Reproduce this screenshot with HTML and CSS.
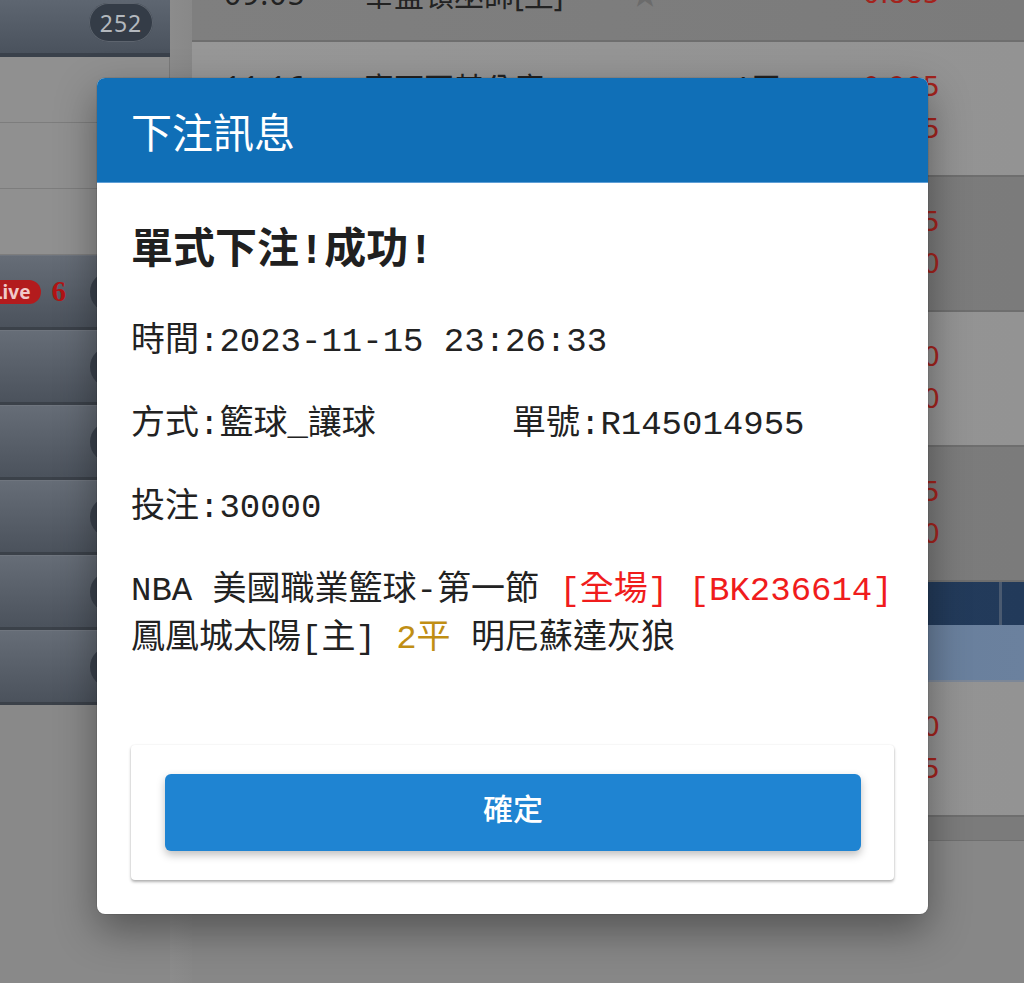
FILE: index.html
```html
<!DOCTYPE html>
<html lang="zh-Hant">
<head>
<meta charset="utf-8">
<title>下注訊息</title>
<link rel="stylesheet" href="styles.css">
</head>
<body>
<div class="screen">
  <aside class="side">
    <div class="side-top"><span class="count">252</span></div>
    <div class="side-light"></div>
    <div class="side-light"></div>
    <div class="side-light"></div>
    <div class="side-dark"><span class="live">Live</span><span class="live-num">6</span><span class="pill"></span></div>
    <div class="side-dark"><span class="pill push"></span></div>
    <div class="side-dark"><span class="pill push"></span></div>
    <div class="side-dark"><span class="pill push"></span></div>
    <div class="side-dark"><span class="pill push"></span></div>
    <div class="side-dark"><span class="pill push"></span></div>
    <div class="side-rest"></div>
  </aside>
  <div class="strip"></div>
  <main class="table">
    <div class="match dark">
      <div class="line"><span class="time">09:05</span><span class="team">布魯克林籃網</span><span class="star"></span><span class="hcp"></span><span class="odds">0.935</span></div>
      <div class="line"><span class="time">09:05</span><span class="team">華盛頓巫師[主]</span><span class="star">★</span><span class="hcp"></span><span class="odds">0.885</span></div>
    </div>
    <div class="match light">
      <div class="line"><span class="time">11:16</span><span class="team">密爾瓦基公鹿</span><span class="star"></span><span class="hcp">1平</span><span class="odds">0.905</span></div>
      <div class="line"><span class="time"></span><span class="team">底特律活塞[主]</span><span class="star"></span><span class="hcp"></span><span class="odds">0.965</span></div>
    </div>
    <div class="match dark">
      <div class="line"><span class="time"></span><span class="team"></span><span class="star"></span><span class="hcp"></span><span class="odds">0.925</span></div>
      <div class="line"><span class="time"></span><span class="team"></span><span class="star"></span><span class="hcp"></span><span class="odds">0.950</span></div>
    </div>
    <div class="match light">
      <div class="line"><span class="time"></span><span class="team"></span><span class="star"></span><span class="hcp"></span><span class="odds">0.910</span></div>
      <div class="line"><span class="time"></span><span class="team"></span><span class="star"></span><span class="hcp"></span><span class="odds">0.940</span></div>
    </div>
    <div class="match dark">
      <div class="line"><span class="time"></span><span class="team"></span><span class="star"></span><span class="hcp"></span><span class="odds">0.895</span></div>
      <div class="line"><span class="time"></span><span class="team"></span><span class="star"></span><span class="hcp"></span><span class="odds">0.970</span></div>
    </div>
    <div class="band"><span class="band-cell"></span><span class="band-cell last"></span></div>
    <div class="subband"></div>
    <div class="match light">
      <div class="line"><span class="time"></span><span class="team"></span><span class="star"></span><span class="hcp"></span><span class="odds">0.930</span></div>
      <div class="line"><span class="time"></span><span class="team"></span><span class="star"></span><span class="hcp"></span><span class="odds">0.935</span></div>
    </div>
    <div class="table-foot"></div>
  </main>
</div>

<div class="modal">
  <header class="modal-head">下注訊息</header>
  <section class="modal-body">
    <h1 class="result">單式下注!成功!</h1>
    <p class="info">時間:2023-11-15 23:26:33</p>
    <p class="info row"><span class="col">方式:籃球_讓球</span><span>單號:R145014955</span></p>
    <p class="info">投注:30000</p>
    <p class="info">NBA 美國職業籃球-第一節 <span class="red">[全場]</span> <span class="red">[BK236614]</span><br>鳳凰城太陽[主] <span class="gold">2平</span> 明尼蘇達灰狼</p>
    <div class="card">
      <button class="ok" type="button">確定</button>
    </div>
  </section>
</div>
</body>
</html>
```

FILE: styles.css
```css
* { box-sizing: border-box; }

html, body {
  margin: 0;
  padding: 0;
}

body {
  width: 1024px;
  height: 983px;
  overflow: hidden;
  position: relative;
  background: #878787;
  font-family: "Noto Sans", "Noto Sans CJK TC", sans-serif;
}

.screen {
  display: flex;
  height: 983px;
}

/* ---------- sidebar ---------- */
.side {
  width: 170px;
  display: flex;
  flex-direction: column;
}

.side-top {
  height: 57px;
  display: flex;
  justify-content: flex-end;
  align-items: flex-start;
  padding: 3px 17px 0 0;
  background: linear-gradient(#5e6671, #4a525d);
  border-bottom: 4px solid #3a414b;
}

.count {
  width: 64px;
  height: 39px;
  border-radius: 20px;
  background: #343c47;
  box-shadow: inset 0 0 0 1px #5d646e;
  color: #b3b8be;
  font-size: 23px;
  letter-spacing: 1px;
  display: flex;
  align-items: center;
  justify-content: center;
}

.side-light {
  height: 66px;
  background: #909090;
  border-bottom: 1px solid #7d7d7d;
  border-right: 1px solid #7a7a7a;
}

.side-dark {
  height: 75px;
  display: flex;
  align-items: center;
  background: linear-gradient(#666d77, #4b525c);
  border-top: 1px solid #6f757e;
  border-bottom: 3px solid #3b4149;
}

.live {
  margin-left: -16px;
  height: 24px;
  padding: 0 10px 0 8px;
  border-radius: 12px;
  background: #b31b1d;
  color: #f1c9c9;
  font-weight: bold;
  font-size: 19px;
  line-height: 24px;
}

.live-num {
  margin-left: 11px;
  color: #b21414;
  font-family: "Liberation Serif", serif;
  font-weight: bold;
  font-size: 29px;
}

.pill {
  margin-left: auto;
  margin-right: -20px;
  width: 100px;
  height: 40px;
  border-radius: 20px;
  background: #3a414c;
}

.side-rest {
  flex: 1;
  background: #898989;
}

.strip {
  width: 22px;
  background: linear-gradient(90deg, #8c8c8c, #888888);
}

/* ---------- table ---------- */
.table {
  flex: 1;
  display: flex;
  flex-direction: column;
  margin-top: -93px;
}

.match {
  height: 135px;
  padding-top: 23px;
  border-bottom: 2px solid #6e6e6e;
  display: flex;
  flex-direction: column;
}

.match.dark { background: linear-gradient(90deg, #7f7f7f, #7b7b7b); }
.match.light { background: linear-gradient(90deg, #979797, #939393); }

.line {
  height: 42px;
  display: flex;
  align-items: center;
  font-size: 30px;
  color: #222;
}

.time {
  width: 172px;
  padding-left: 32px;
  letter-spacing: 1px;
}

.team {
  width: 267px;
}

.star {
  width: 103px;
  color: #6b6b6b;
  font-size: 28px;
}

.hcp {
  width: 100px;
}

.odds {
  margin-left: auto;
  padding-right: 84px;
  color: #a3231d;
  font-family: "DejaVu Sans", sans-serif;
  font-size: 27px;
}

.band {
  height: 43px;
  display: flex;
  background: linear-gradient(90deg, #2a4262, #223a5a);
}

.band-cell {
  flex: 1;
  border-right: 3px solid #4a5a70;
}

.band-cell.last {
  flex: 0 0 22px;
  border-right: 0;
}

.subband {
  height: 57px;
  background: linear-gradient(90deg, #5a7293, #6b819e);
  border-bottom: 2px solid #7c8797;
}

.table-foot {
  height: 24px;
  background: #7b7b7b;
  border-bottom: 1px solid #6f6f6f;
}

/* ---------- modal ---------- */
.modal {
  position: absolute;
  left: 97px;
  top: 78px;
  width: 831px;
  background: #fff;
  border-radius: 8px;
  overflow: hidden;
  box-shadow: 0 16px 40px rgba(0, 0, 0, 0.38), 0 0 0 1px rgba(0, 0, 0, 0.08);
  font-family: "Liberation Mono", "Noto Sans CJK TC", monospace;
  color: #222;
}

.modal-head {
  height: 105px;
  padding-left: 34px;
  display: flex;
  align-items: center;
  background: #106fb7;
  border-bottom: 1px solid #5f9fd6;
  color: #fff;
  font-family: "Noto Sans CJK TC", sans-serif;
  font-size: 41px;
  font-weight: 400;
}

.modal-body {
  padding: 44px 34px 34px;
}

.result {
  margin: 0 0 41px;
  font-size: 42px;
  line-height: 50px;
  font-weight: bold;
  color: #202020;
}

.info {
  margin: 0 0 35px;
  font-size: 34px;
  line-height: 48px;
}

.info.row {
  display: flex;
}

.col {
  width: 381px;
}

.red { color: #f01c1c; }
.gold { color: #c08e14; }

.card {
  margin-top: 82px;
  height: 135px;
  padding: 29px 33px 29px 34px;
  background: #fff;
  border-radius: 4px;
  box-shadow: 0 2px 3px rgba(0, 0, 0, 0.3), 0 0 2px rgba(0, 0, 0, 0.08);
}

.ok {
  display: block;
  width: 100%;
  height: 77px;
  padding: 0 0 11px;
  border: 0;
  border-radius: 6px;
  background: #1f84d2;
  color: #fff;
  font-family: "Noto Sans CJK TC", sans-serif;
  font-size: 30px;
  font-weight: 500;
  box-shadow: 0 4px 8px rgba(0, 0, 0, 0.25);
}
```
